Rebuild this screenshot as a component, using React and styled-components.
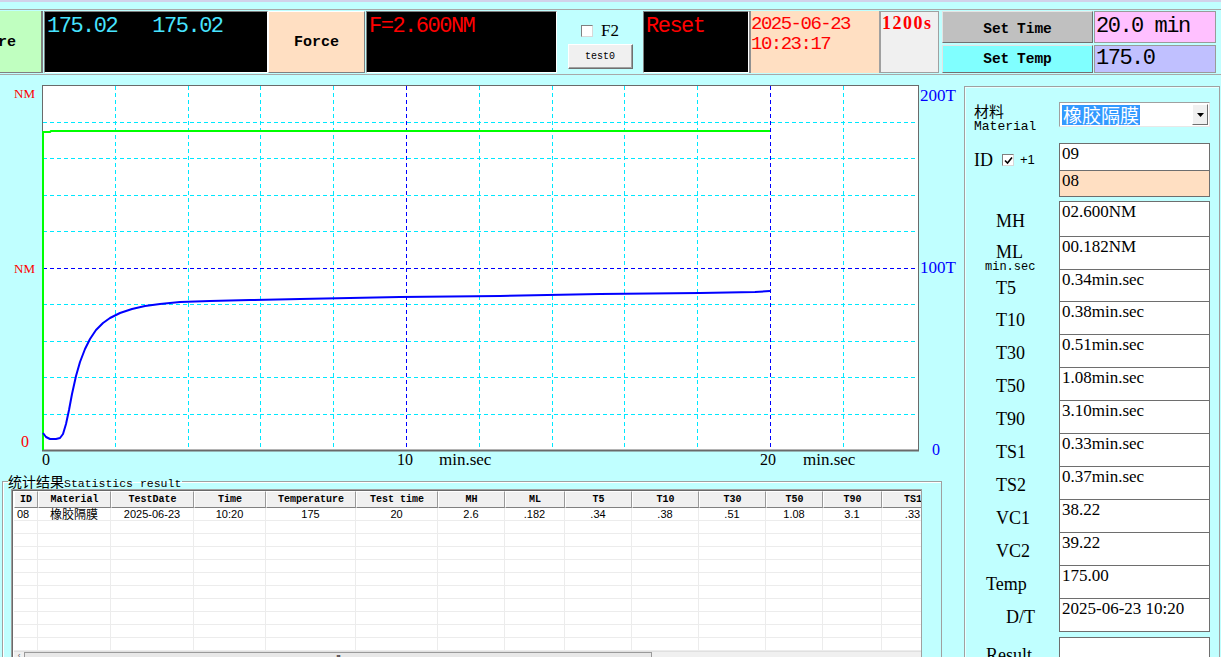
import React from 'react';
import styled, { createGlobalStyle } from 'styled-components';

const GlobalStyle = createGlobalStyle`
  html, body {
    margin: 0;
    padding: 0;
    background: #c0ffff;
  }
  body {
    overflow: hidden;
  }
`;

const Page = styled.div`
  width: 1221px;
  height: 657px;
  overflow: hidden;
  box-sizing: border-box;
  background: #c0ffff;
  border-top: 2px solid #d2d2ea;
  font-family: "Liberation Serif", serif;
`;

/* ---------- top bar ---------- */

const TopBar = styled.div`
  margin-top: 7px;
  height: 62px;
  padding: 1px 0;
  display: flex;
  border-top: 1px solid #a8a8a8;
  border-bottom: 1px solid #a8a8a8;
`;

const SideTab = styled.div`
  width: 43px;
  flex: none;
  box-sizing: border-box;
  background: #c0ffc0;
  border-right: 2px solid #808080;
  border-bottom: 1px solid #808080;
  display: flex;
  align-items: center;
  padding-top: 3px;
  overflow: hidden;
  font: bold 15px/18px "Liberation Mono", monospace;
  text-indent: -2px;
`;

const Readout = styled.div`
  width: ${p => p.$w}px;
  margin-left: ${p => p.$ml || 0}px;
  flex: none;
  box-sizing: border-box;
  background: #000;
  color: ${p => p.$color};
  border: 1px solid;
  border-color: #808080 #ffffff #ffffff #808080;
  padding: 3px 2px 0;
  font: 22px/24px "Liberation Mono", monospace;
  letter-spacing: -1.5px;
  white-space: pre;
  overflow: hidden;
`;

const PeachButton = styled.div`
  width: 97px;
  flex: none;
  box-sizing: border-box;
  background: #ffdfc2;
  border: 1px solid;
  border-color: #ffffff #808080 #808080 #ffffff;
  display: flex;
  align-items: center;
  justify-content: center;
  padding-top: 2px;
  font: bold 15px/18px "Liberation Mono", monospace;
`;

const ToggleArea = styled.div`
  width: 86px;
  flex: none;
  display: flex;
  flex-direction: column;
  align-items: center;
  padding-top: 11px;
  box-sizing: border-box;
`;

const CheckRow = styled.div`
  display: flex;
  align-items: center;
  gap: 8px;
  height: 18px;
  font: 17px/18px "Liberation Serif", serif;
`;

const Tick = styled.span`
  width: ${p => p.$size}px;
  height: ${p => p.$size}px;
  box-sizing: border-box;
  background: #fff;
  border: 1px solid;
  border-color: #808080 #d8d8d8 #d8d8d8 #808080;
  display: inline-flex;
  align-items: center;
  justify-content: center;
  flex: none;
`;

const SmallButton = styled.div`
  margin-top: 4px;
  width: 65px;
  height: 25px;
  box-sizing: border-box;
  background: #f0f0f0;
  border: 1px solid;
  border-color: #ffffff #707070 #707070 #ffffff;
  box-shadow: inset -1px -1px #a0a0a0;
  display: flex;
  align-items: center;
  justify-content: center;
  font: 10px/12px "Liberation Mono", monospace;
`;

const DateBox = styled.div`
  width: 130px;
  flex: none;
  box-sizing: border-box;
  background: #ffdfc2;
  border-left: 2px solid #909090;
  color: #ff0000;
  padding: 3px 0 0 0;
  font: 19px/20px "Liberation Mono", monospace;
  letter-spacing: -1.5px;
`;

const TimerBox = styled.div`
  width: 60px;
  flex: none;
  box-sizing: border-box;
  background: #f0f0f0;
  border: 1px solid #a0a0a0;
  border-left-width: 2px;
  color: #ff0000;
  padding: 1px 0 0 1px;
  font: bold 18px/20px "Liberation Serif", serif;
  letter-spacing: 1.5px;
`;

const SetColumn = styled.div`
  width: ${p => p.$w}px;
  margin-left: ${p => p.$ml}px;
  flex: none;
  display: flex;
  flex-direction: column;
  gap: 2px;
`;

const SetButton = styled.div`
  height: ${p => p.$h}px;
  box-sizing: border-box;
  background: ${p => p.$bg};
  border: 1px solid;
  border-color: #e4e4e4 #707070 #707070 #e4e4e4;
  display: flex;
  align-items: center;
  justify-content: center;
  padding-top: ${p => p.$pt || 0}px;
  font: bold 14.5px/16px "Liberation Mono", monospace;
  word-spacing: -1px;
`;

const SetValue = styled.div`
  height: ${p => p.$h}px;
  box-sizing: border-box;
  background: ${p => p.$bg};
  border: 1px solid #9a9a9a;
  padding: ${p => p.$pt}px 0 0 1px;
  font: 22px/24px "Liberation Mono", monospace;
  letter-spacing: -1.5px;
  white-space: pre;
  overflow: hidden;
`;

/* ---------- main area ---------- */

const Main = styled.div`
  display: flex;
  align-items: flex-start;
`;

const LeftColumn = styled.div`
  width: 960px;
  flex: none;
`;

const ChartSvg = styled.svg`
  display: block;
`;

const GroupBox = styled.fieldset`
  margin: 0 0 0 2px;
  padding: 0 0 0 5px;
  width: 940px;
  height: 200px;
  box-sizing: border-box;
  border: 1px solid #a0a0a0;
  box-shadow: inset 1px 1px #ffffff;
  min-width: 0;
`;

const Legend = styled.legend`
  padding: 0 1px 0 0;
  height: 16px;
  line-height: 16px;
  font-size: 12px;
`;

const LegendCjk = styled.span`
  font: 14px/16px "Noto Sans CJK SC", sans-serif;
`;

const LegendLatin = styled.span`
  font: 11.5px/16px "Liberation Mono", monospace;
`;

const ListView = styled.div`
  margin-left: 3px;
  width: 911px;
  height: 190px;
  box-sizing: border-box;
  background: #fff;
  border: 1px solid #a0a0a0;
  box-shadow: inset 1px 1px #696969;
  padding: 1px 0 0 2px;
  overflow: hidden;
`;

const COLS = [24, 73, 83, 72, 90, 82, 67, 60, 67, 67, 67, 57, 59, 62];

const ListGrid = styled.div`
  display: grid;
  grid-template-columns: ${COLS.map(c => c + 'px').join(' ')};
  width: max-content;
`;

const HeadCell = styled.div`
  height: 17px;
  box-sizing: border-box;
  background: #f0f0f0;
  border: 1px solid;
  border-color: #ffffff #9a9a9a #808080 #ffffff;
  display: flex;
  align-items: center;
  justify-content: center;
  font: bold 10px/12px "Liberation Mono", monospace;
  color: #000;
  white-space: nowrap;
  overflow: hidden;
`;

const BodyCell = styled.div`
  height: 13px;
  box-sizing: border-box;
  border-right: 1px solid #ececec;
  border-bottom: 1px solid #ececec;
  display: flex;
  align-items: center;
  justify-content: ${p => (p.$left ? 'flex-start' : 'center')};
  padding-left: ${p => (p.$left ? 3 : 0)}px;
  font: ${p => (p.$cjk ? '12px/12px "Noto Sans CJK SC", sans-serif' : '11px/12px "Liberation Sans", sans-serif')};
  color: #000;
  white-space: nowrap;
`;

const ScrollBar = styled.div`
  height: 17px;
  display: flex;
  background: #f0f0f0;
  border-top: 1px solid #e0e0e0;
`;

const ScrollArrow = styled.div`
  width: 10px;
  flex: none;
  display: flex;
  justify-content: center;
  font: 8px/8px "Liberation Sans", sans-serif;
  color: #606060;
`;

const ScrollThumb = styled.div`
  width: 628px;
  flex: none;
  box-sizing: border-box;
  background: #e8e8e8;
  border: 1px solid #9a9a9a;
  display: flex;
  justify-content: center;
  padding-top: 1px;
  font: bold 8px/8px "Liberation Sans", sans-serif;
  letter-spacing: -1px;
  color: #404040;
`;

/* ---------- side panel ---------- */

const SidePanel = styled.aside`
  margin: 11px 0 0 4px;
  width: 256px;
  height: 620px;
  flex: none;
  box-sizing: border-box;
  border: 1px solid #a0a0a0;
  box-shadow: inset 1px 1px #e8ffff;
  padding: 15px 0 0 0;
`;

const FieldRow = styled.div`
  display: flex;
  height: ${p => (p.$h ? p.$h + 'px' : 'auto')};
  margin-top: ${p => p.$mt || 0}px;
`;

const LabelCell = styled.div`
  width: 94px;
  flex: none;
  box-sizing: border-box;
  padding-left: ${p => p.$indent}px;
  padding-top: ${p => p.$pt || 0}px;
  display: flex;
  flex-direction: column;
  justify-content: ${p => (p.$top ? 'flex-start' : 'center')};
`;

const LabelCjk = styled.div`
  font: 15px/17px "Noto Sans CJK SC", sans-serif;
`;

const LabelMono = styled.div`
  font: ${p => p.$size}px/${p => p.$lh}px "Liberation Mono", monospace;
  margin-left: ${p => p.$ml || 0}px;
`;

const LabelSerif = styled.div`
  font: 18px/18px "Liberation Serif", serif;
  margin-left: ${p => p.$ml || 0}px;
  display: flex;
  align-items: center;
`;

const Combo = styled.div`
  width: 151px;
  height: 25px;
  box-sizing: border-box;
  background: #fff;
  border: 1px solid;
  border-color: #a0a0a0 #e8e8e8 #e8e8e8 #a0a0a0;
  padding: 1px;
  display: flex;
  align-items: center;
  justify-content: space-between;
`;

const ComboText = styled.span`
  background: #3399ff;
  color: #fff;
  padding: 0 1px;
  margin-left: 1px;
  font: 19px/20px "Noto Sans CJK SC", sans-serif;
`;

const ComboArrow = styled.span`
  width: 16px;
  height: 21px;
  box-sizing: border-box;
  background: #f0f0f0;
  border: 1px solid;
  border-color: #ffffff #707070 #707070 #ffffff;
  display: flex;
  align-items: center;
  justify-content: center;
`;

const PlusOne = styled.span`
  font: 13px/14px "Liberation Sans", sans-serif;
`;

const IdStack = styled.div`
  width: 151px;
  flex: none;
  display: flex;
  flex-direction: column;
`;

const ValueBox = styled.div`
  width: 151px;
  height: ${p => p.$h}px;
  flex: none;
  box-sizing: border-box;
  background: ${p => p.$bg || '#fff'};
  border: 1px solid #6e6e6e;
  margin-top: ${p => (p.$join ? -1 : 0)}px;
  padding: 0 2px;
  font: 17px/20px "Liberation Serif", serif;
  white-space: nowrap;
  overflow: hidden;
`;

/* ---------- data ---------- */

const headers = ['ID', 'Material', 'TestDate', 'Time', 'Temperature', 'Test time', 'MH', 'ML', 'T5', 'T10', 'T30', 'T50', 'T90', 'TS1'];
const firstRow = ['08', '橡胶隔膜', '2025-06-23', '10:20', '175', '20', '2.6', '.182', '.34', '.38', '.51', '1.08', '3.1', '.33'];

const results = [
  { label: 'MH', value: '02.600NM', h: 36 },
  { label: 'ML', value: '00.182NM', h: 34, sub: true },
  { label: 'T5', value: '0.34min.sec', h: 33 },
  { label: 'T10', value: '0.38min.sec', h: 34 },
  { label: 'T30', value: '0.51min.sec', h: 34 },
  { label: 'T50', value: '1.08min.sec', h: 34 },
  { label: 'T90', value: '3.10min.sec', h: 34 },
  { label: 'TS1', value: '0.33min.sec', h: 34 },
  { label: 'TS2', value: '0.37min.sec', h: 34 },
  { label: 'VC1', value: '38.22', h: 34 },
  { label: 'VC2', value: '39.22', h: 34 },
  { label: 'Temp', value: '175.00', h: 34, indent: 21 },
  { label: 'D/T', value: '2025-06-23 10:20', h: 34, indent: 41 },
];

const bluePts = [
  [43, 433], [46, 437], [50, 439], [56, 439], [60, 438], [63, 434], [66, 424], [69, 410],
  [72, 394], [76, 376], [80, 362], [85, 349], [90, 339], [96, 330], [103, 323], [110, 318],
  [120, 313], [132, 309], [145, 306], [160, 304], [180, 302], [210, 301], [250, 300],
  [300, 299], [400, 297], [500, 296], [600, 294], [700, 293], [755, 292], [770, 291],
];

// chart is drawn in svg coords: page y minus 75
const OY = 75;
const PX = 42;
const PY = 10;
const PW = 876;
const PH = 365;

function Chart() {
  const vLines = Array.from({ length: 11 }, (_, i) => i + 1);
  const hLines = Array.from({ length: 9 }, (_, i) => i + 1);
  const blue = bluePts.map(([x, y]) => `${x},${y - OY}`).join(' ');

  return (
    <ChartSvg width="960" height="398" viewBox="0 0 960 398">
      <rect x={PX + 0.5} y={PY + 0.5} width={PW} height={PH} fill="#fff" stroke="#6a6a6a" />
      {vLines.map(i => {
        const x = Math.round(PX + i * 72.8) + 0.5;
        const major = i === 5 || i === 10;
        return (
          <line key={'v' + i} x1={x} x2={x} y1={PY + 1} y2={PY + PH}
            stroke={major ? '#0000ff' : '#00e8ff'} strokeDasharray="4 3" />
        );
      })}
      {hLines.map(j => {
        const y = Math.round(PY + j * 36.5) + 0.5;
        const major = j === 5;
        return (
          <line key={'h' + j} x1={PX + 1} x2={PX + PW} y1={y} y2={y}
            stroke={major ? '#0000ff' : '#00e8ff'} strokeDasharray="4 3" />
        );
      })}
      <line x1={PX} x2={PX + PW + 1} y1={PY + PH + 0.5} y2={PY + PH + 0.5} stroke="#6a6a6a" strokeWidth="2" />

      <polyline points={`43,${PY + PH} 43,57 50,57 51,56 770,56`} fill="none" stroke="#00ff00" strokeWidth="2" />
      <polyline points={blue} fill="none" stroke="#0000ff" strokeWidth="2" strokeLinejoin="round" />

      <g fontFamily="Liberation Serif, serif">
        <text x="14" y="23" fontSize="13" fill="#ff0000">NM</text>
        <text x="14" y="198" fontSize="13" fill="#ff0000">NM</text>
        <text x="21" y="372" fontSize="16" fill="#ff0000">0</text>
        <text x="920" y="26" fontSize="17" fill="#0000ff">200T</text>
        <text x="920" y="198" fontSize="17" fill="#0000ff">100T</text>
        <text x="932" y="380" fontSize="16" fill="#0000ff">0</text>
        <text x="42" y="390" fontSize="16" fill="#000">0</text>
        <text x="397" y="390" fontSize="16" fill="#000">10</text>
        <text x="439" y="390" fontSize="17" fill="#000">min.sec</text>
        <text x="760" y="390" fontSize="16" fill="#000">20</text>
        <text x="803" y="390" fontSize="17" fill="#000">min.sec</text>
      </g>
    </ChartSvg>
  );
}

const CheckMark = () => (
  <svg width="9" height="9" viewBox="0 0 9 9">
    <path d="M1 4.5 L3.5 7 L8 1.5" fill="none" stroke="#000" strokeWidth="1.6" />
  </svg>
);

const DownArrow = () => (
  <svg width="7" height="4" viewBox="0 0 7 4">
    <path d="M0 0 H7 L3.5 4 Z" fill="#000" />
  </svg>
);

export default function App() {
  const emptyRows = Array.from({ length: 10 }, (_, i) => i);

  return (
    <Page>
      <GlobalStyle />
      <TopBar>
        <SideTab>re</SideTab>
        <Readout $w={224} $ml={1} $color="#48e4ff">{'175.02   175.02'}</Readout>
        <PeachButton>Force</PeachButton>
        <Readout $w={191} $ml={1} $color="#ff0000">F=2.600NM</Readout>
        <ToggleArea>
          <CheckRow>
            <Tick $size={12} />
            <span>F2</span>
          </CheckRow>
          <SmallButton>test0</SmallButton>
        </ToggleArea>
        <Readout $w={106} $color="#ff0000">Reset</Readout>
        <DateBox>
          2025-06-23
          <br />
          10:23:17
        </DateBox>
        <TimerBox>1200s</TimerBox>
        <SetColumn $w={151} $ml={3}>
          <SetButton $h={32} $bg="#c0c0c0" $pt={3}>Set Time</SetButton>
          <SetButton $h={28} $bg="#80ffff">Set Temp</SetButton>
        </SetColumn>
        <SetColumn $w={122} $ml={1}>
          <SetValue $h={32} $bg="#ffc0ff" $pt={3}>20.0 min</SetValue>
          <SetValue $h={28} $bg="#c0c0ff" $pt={1}>175.0</SetValue>
        </SetColumn>
      </TopBar>

      <Main>
        <LeftColumn>
          <Chart />
          <GroupBox>
            <Legend>
              <LegendCjk>统计结果</LegendCjk>
              <LegendLatin>Statistics result</LegendLatin>
            </Legend>
            <ListView>
              <ListGrid>
                {headers.map(h => (
                  <HeadCell key={h}>{h}</HeadCell>
                ))}
                {firstRow.map((v, i) => (
                  <BodyCell key={'r0' + i} $left={i === 0} $cjk={i === 1}>{v}</BodyCell>
                ))}
                {emptyRows.map(r =>
                  COLS.map((_, i) => <BodyCell key={r + '-' + i} />)
                )}
              </ListGrid>
              <ScrollBar>
                <ScrollArrow>‹</ScrollArrow>
                <ScrollThumb>|||</ScrollThumb>
              </ScrollBar>
            </ListView>
          </GroupBox>
        </LeftColumn>

        <SidePanel>
          <FieldRow $h={25}>
            <LabelCell $indent={9} $top>
              <LabelCjk>材料</LabelCjk>
              <LabelMono $size={13} $lh={15}>Material</LabelMono>
            </LabelCell>
            <Combo>
              <ComboText>橡胶隔膜</ComboText>
              <ComboArrow>
                <DownArrow />
              </ComboArrow>
            </Combo>
          </FieldRow>

          <FieldRow $mt={16}>
            <LabelCell $indent={9} $pt={8} $top>
              <LabelSerif>
                ID
                <Tick $size={12} style={{ marginLeft: 9, marginRight: 6 }}>
                  <CheckMark />
                </Tick>
                <PlusOne>+1</PlusOne>
              </LabelSerif>
            </LabelCell>
            <IdStack>
              <ValueBox $h={28}>09</ValueBox>
              <ValueBox $h={27} $bg="#ffdfc2" $join>08</ValueBox>
            </IdStack>
          </FieldRow>

          {results.map((r, i) => (
            <FieldRow key={r.label} $h={r.h} $mt={i === 0 ? 4 : -1}>
              <LabelCell $indent={r.indent || 31} $pt={r.sub ? 7 : 4} $top={r.sub}>
                {r.sub ? (
                  <>
                    <LabelSerif>{r.label}</LabelSerif>
                    <LabelMono $size={12} $lh={12} $ml={-11}>min.sec</LabelMono>
                  </>
                ) : (
                  <LabelSerif>{r.label}</LabelSerif>
                )}
              </LabelCell>
              <ValueBox $h={r.h}>{r.value}</ValueBox>
            </FieldRow>
          ))}

          <FieldRow $mt={5}>
            <LabelCell $indent={21} $pt={9} $top>
              <LabelSerif>Result</LabelSerif>
            </LabelCell>
            <ValueBox $h={40} />
          </FieldRow>
        </SidePanel>
      </Main>
    </Page>
  );
}
